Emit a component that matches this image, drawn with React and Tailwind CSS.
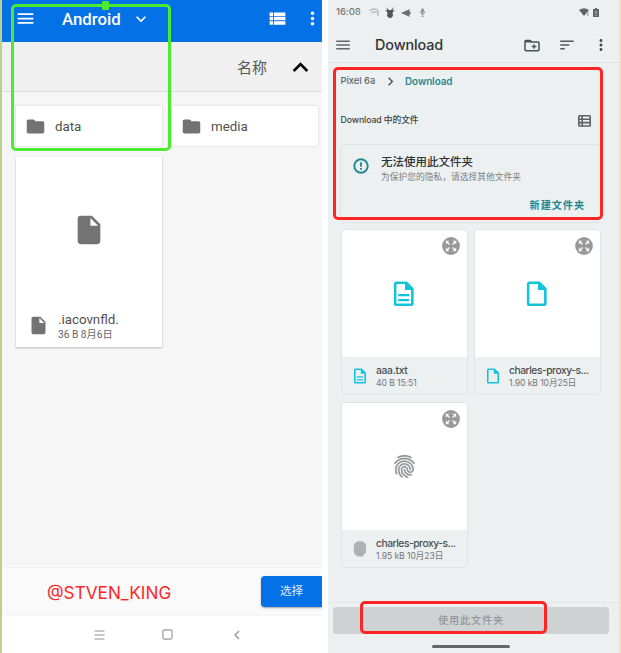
import React from "react";
import {
  MdFolder, MdInsertDriveFile, MdViewList, MdMenu, MdMoreVert, MdExpandMore, MdExpandLess,
  MdSort, MdFingerprint, MdWifi, MdChevronRight, MdChevronLeft,
} from "react-icons/md";

const DocIcon = ({ size, lines }) => (
  <svg width={size} height={size} viewBox="0 0 24 24" fill="none" stroke="#12c3dc" strokeWidth="2.1" className="shrink-0">
    <path d="M14 3H6a1 1 0 0 0-1 1v16a1 1 0 0 0 1 1h12a1 1 0 0 0 1-1V8z" strokeLinejoin="round" />
    <path d="M13 2.5V9h6.5l-5.5-6z" fill="#12c3dc" stroke="none" />
    {lines && <path d="M7.5 13.2h9M7.5 17.2h9" strokeWidth="1.8" />}
  </svg>
);

const NewFolderIcon = () => (
  <svg width="16" height="13" viewBox="0 0 16 13" fill="none" stroke="#4b5052" strokeWidth="1.5" className="shrink-0">
    <path d="M1 2.2v8.6q0 1 1 1h12q1 0 1-1V4q0-1-1-1H7.5L6 1.5H1.7Q1 1.5 1 2.2z" />
    <path d="M1.5 2.5h6" strokeWidth="2" />
    <path d="M10 5.2v4.6M7.7 7.5h4.6" strokeWidth="1.3" />
  </svg>
);

const ListIcon = () => (
  <svg width="13" height="12" viewBox="0 0 13 12" fill="none" stroke="#5f6365" strokeWidth="1.6" className="shrink-0">
    <rect x=".8" y=".8" width="11.4" height="10.2" rx=".6" />
    <path d="M1 4.2h11M1 7.6h11M4.2 1v10" />
  </svg>
);

const AlertIcon = () => (
  <svg width="16" height="16" viewBox="0 0 16 16" fill="none" stroke="#248894" strokeWidth="1.9" className="ml-[12px] mt-[13px] shrink-0">
    <circle cx="8" cy="8" r="6.7" />
    <path d="M8 4.2v4.6M8 10v1.8" />
  </svg>
);

const ExpandBadge = () => (
  <svg width="18" height="18" viewBox="0 0 18 18">
    <circle cx="9" cy="9" r="8.9" fill="#989898" />
    <g fill="#f6f6f6">
      <path d="M3.8 3.8h3.6L3.8 7.4zM14.2 3.8v3.6l-3.6-3.6zM3.8 14.2v-3.6l3.6 3.6zM14.2 14.2h-3.6l3.6-3.6z" />
    </g>
    <path d="M5 5l2.5 2.5M13 5l-2.5 2.5M5 13l2.5-2.5M13 13l-2.5-2.5" stroke="#f6f6f6" strokeWidth="1.5" />
  </svg>
);

const FolderCard = ({ name }) => (
  <div className="flex h-10 w-[146px] items-center bg-white pl-[9px] shadow-[0_0_2px_rgba(0,0,0,0.16)]">
    <MdFolder size={21} color="#737373" />
    <span className="ml-[9px] mt-[2px] text-[13.3px] leading-4 text-[#505050]">{name}</span>
  </div>
);

const FileCard = ({ name, meta, kind }) => (
  <div className="flex h-[166px] w-[127px] flex-col overflow-hidden rounded-[5px] border border-[#e1e4e5] bg-[#ecf0f1]">
    <div className="relative flex h-[127px] shrink-0 items-center justify-center bg-white pr-px">
      {kind === "apk" ? (
        <MdFingerprint size={27} color="#8c8e90" stroke="#8c8e90" strokeWidth="0.5" className="[&>path:first-child]:stroke-none" />
      ) : (
        <DocIcon size={29.5} lines={kind === "text"} />
      )}
      <div className="absolute right-[7px] top-[7px]">
        <ExpandBadge />
      </div>
    </div>
    <div className="flex pl-[8px] pt-[5px]">
      <div className="mt-[5px] flex w-[19px] justify-center">
        {kind === "apk" ? (
          <svg width="14" height="18" viewBox="0 0 14 18" className="shrink-0">
            <path d="M3 2.2Q7 .2 11 2.2L13 5v7l-1.5 2-2 2.5-5-.2L1.5 14 .8 11V5z" fill="#a9adae" />
            <path d="M1.5 6Q7 1.5 12.4 6M2 10Q4 5 9 7t3 5M4 15q-1-5 3-5t3 5" fill="none" stroke="#bfc3c4" strokeWidth=".7" />
          </svg>
        ) : (
          <DocIcon size={18} lines={kind === "text"} />
        )}
      </div>
      <div className="ml-[7px] mt-px whitespace-nowrap">
        <div className="text-[10.3px] font-medium leading-[14px] text-[#4a4e50]">
          <span className={kind === "text" ? "tracking-[-0.3px]" : "tracking-[-0.48px]"}>{name}</span>
        </div>
        <div className="text-[8.6px] leading-[13px] tracking-[-0.08px] text-[#737779]">{meta}</div>
      </div>
    </div>
  </div>
);

const LeftPhone = () => (
  <div className="flex h-[653px] w-[322px] shrink-0 flex-col overflow-hidden border-l-2 border-[#bcd08c] bg-[#f6f6f6] font-[Roboto,'Noto_Sans_CJK_SC',sans-serif]">
    <header className="flex h-[42px] shrink-0 items-start bg-[#0571e6] pl-[13px] pt-2 text-white shadow-[0_1px_2px_rgba(0,0,0,0.25)]">
      <MdMenu size={21} className="shrink-0" />
      <span className="ml-[26px] mt-[1px] w-[58px] text-[16.8px] font-medium leading-5">Android</span>
      <MdExpandMore size={20} className="ml-[11px] mt-px shrink-0" />
      <MdViewList size={21} className="ml-[116px] shrink-0" />
      <MdMoreVert size={21} className="ml-[14px] shrink-0" />
    </header>
    <div className="flex h-[50px] shrink-0 items-center border-b border-[#dedede] bg-[#f0f0f0] pl-[235px]">
      <span className="mt-[2px] text-[15px] leading-5 text-[#555]">名称</span>
      <MdExpandLess size={31} color="#000" className="ml-[18px] mt-[2px] shrink-0" />
    </div>
    <main className="flex grow flex-col gap-[11px] pl-[14px] pt-[14px]">
      <div className="flex gap-[10px]">
        <FolderCard name="data" />
        <FolderCard name="media" />
      </div>
      <div className="flex h-[190px] w-[146px] flex-col bg-white shadow-[0_1px_2px_rgba(0,0,0,0.25)]">
        <div className="flex h-[146px] items-center justify-center">
          <MdInsertDriveFile size={34} color="#737373" />
        </div>
        <div className="flex pl-3 pt-[8px]">
          <MdInsertDriveFile size={21} color="#737373" className="mt-[4px] shrink-0" />
          <div className="ml-[9px] mt-px whitespace-nowrap">
            <div className="text-[13.3px] leading-4 text-[#505050]">.iacovnfld.</div>
            <div className="text-[10.2px] leading-[14px] text-[#666]">36 B 8月6日</div>
          </div>
        </div>
      </div>
    </main>
    <footer className="flex h-12 shrink-0 items-center justify-between border-t border-[#f2f2f2] bg-[#fafafa] pl-[45px]">
      <span className="whitespace-nowrap pt-[3px] font-[Inter,sans-serif] text-[17.2px] leading-5 text-[#ff2727]">@STVEN_KING</span>
      <button className="h-[31px] w-[61px] rounded-l-sm bg-[#0571e6] text-[11.5px] text-[#d9eaff] shadow-[0_1px_2px_rgba(0,0,0,0.35)]">选择</button>
    </footer>
    <nav className="flex h-[38px] shrink-0 items-center border-t border-[#f5f5f5] bg-white pl-[92px]">
      <svg width="11" height="10" viewBox="0 0 11 10" stroke="#b8b8b8" strokeWidth="1.7">
        <path d="M.5 1h10M.5 5h10M.5 9h10" />
      </svg>
      <svg width="11" height="11" viewBox="0 0 11 11" fill="none" stroke="#b4b4b4" strokeWidth="1.6" className="ml-[57px]">
        <rect x=".9" y=".9" width="9.2" height="9.2" rx="2" />
      </svg>
      <MdChevronLeft size={18} color="#a0a0a0" className="ml-[55px]" />
    </nav>
  </div>
);

const RightPhone = () => (
  <div className="ml-[6px] flex h-[653px] w-[293px] shrink-0 flex-col overflow-hidden border-r-2 border-[#ffe0a8] bg-[#ecf0f1] font-[Inter,'Noto_Sans_CJK_SC',sans-serif]">
    <div className="flex h-[25px] shrink-0 items-center pl-2 text-[#777]">
      <span className="w-[25px] text-[9.6px] font-medium tracking-[-0.1px]">16:08</span>
      <svg width="10" height="9" viewBox="0 0 10 9" className="ml-[8px]" fill="none" stroke="#b9bcbd" strokeWidth="1.5">
        <path d="M.5 3Q5-1 9.5 3M2.2 5Q5 2.4 7.8 5M9 3v5" />
      </svg>
      <svg width="10" height="11" viewBox="0 0 10 11" className="ml-[6px]" fill="#555">
        <path d="M1 0 4 3H6L9 0 7.5 3.5 10 3 7.5 5.5 8 9 6 11H4L2 9 2.5 5.5 0 3l2.5.5z" />
      </svg>
      <svg width="10" height="8" viewBox="0 0 10 8" className="ml-[6px]" fill="#6b6d6e">
        <path d="M0 4 9 0 8 2.4h1.5v3H8L9 8z" />
      </svg>
      <svg width="7" height="9" viewBox="0 0 7 9" className="ml-[8px]" fill="none" stroke="#999">
        <path d="M3.5 0v7M1 4l2.5 3L6 4zM2 8.2h3M2.5 1v3M4.5 1v3" />
      </svg>
      <svg width="10" height="9" viewBox="0 0 10 9" className="ml-[153px]">
        <path d="M0 2Q5-1.5 10 2L5 8z" fill="#626566" />
        <path d="M8.8 4v4" stroke="#aaa" strokeWidth="1.4" />
      </svg>
      <svg width="6" height="9" viewBox="0 0 6 9" className="ml-[4px]">
        <path d="M2 0h2v1h2v8H0V1h2z" fill="#626566" />
        <path d="M3 3v3M3 7v1" stroke="#ccc" />
      </svg>
    </div>
    <header className="flex h-[38px] shrink-0 items-center border-b border-[#dfe3e4] pl-[6px] pt-[3px]">
      <MdMenu size={18} color="#626667" className="shrink-0" />
      <h1 className="ml-[23px] w-[149px] text-[14.4px] font-medium tracking-[-0.1px] text-[#303436]">Download</h1>
      <NewFolderIcon />
      <MdSort size={18} color="#55595b" className="ml-[18px] shrink-0" />
      <MdMoreVert size={18} color="#484c4e" className="ml-[16px] shrink-0" />
    </header>
    <div className="flex h-[36px] shrink-0 items-center pl-[12.5px] text-[9.8px] font-medium">
      <span className="w-9 whitespace-nowrap text-[9.3px] text-[#616567]">Pixel 6a</span>
      <MdChevronRight size={17} color="#505456" stroke="#505456" className="ml-[5px] [&>path:first-child]:stroke-none" />
      <span className="ml-[6.5px] text-[9.9px] font-semibold tracking-[-0.05px] text-[#248894]">Download</span>
    </div>
    <div className="flex h-[41px] shrink-0 items-center justify-between pl-[12.5px] pr-[28px] pt-[2px]">
      <span className="text-[8.75px] font-medium tracking-[-0.1px] text-[#3f4345]">Download 中的文件</span>
      <ListIcon />
    </div>
    <section className="ml-[12px] mt-[4px] flex h-[79px] w-[261px] shrink-0 rounded-[5px] border border-[#dfe3e4]">
      <AlertIcon />
      <div className="ml-[12px] w-[204px]">
        <div className="mt-[9px] text-[11.5px] font-medium leading-4 text-[#303436]">无法使用此文件夹</div>
        <div className="text-[8.75px] leading-[14px] text-[#7b8082]">为保护您的隐私，请选择其他文件夹</div>
        <div className="mt-[13px] text-right text-[10.2px] font-bold leading-4 tracking-[0.9px] text-[#248894]">新建文件夹</div>
      </div>
    </section>
    <div className="ml-[13px] mt-[6px] grid w-[260px] shrink-0 grid-cols-[127px_127px] gap-x-[6px] gap-y-[7px]">
      <FileCard name="aaa.txt" meta="40 B 15:51" kind="text" />
      <FileCard name="charles-proxy-s..." meta="1.90 kB 10月25日" kind="file" />
      <FileCard name="charles-proxy-s..." meta="1.95 kB 10月23日" kind="apk" />
    </div>
    <footer className="mt-auto flex h-[51px] shrink-0 flex-col border-t border-[#e4e8e9] pl-[5px] pt-[4px]">
      <button className="h-[27px] w-[276px] rounded-[3px] bg-[#cfd2d3] text-[10.2px] font-medium tracking-[0.8px] text-[#939698]">使用此文件夹</button>
      <div className="ml-[99px] mt-[11px] h-[3px] w-[78px] rounded-full bg-[#646667]" />
    </footer>
  </div>
);

export default function App() {
  return (
    <div className="relative flex h-[653px] w-[621px] overflow-hidden bg-white">
      <LeftPhone />
      <RightPhone />
      <div className="absolute left-[11px] top-1 h-[147px] w-[160px] rounded-[5px] border-[3px] border-[#4eea32]" />
      <div className="absolute left-[102px] top-[1px] h-[9px] w-[7px] rounded-[1px] bg-[#4eea32]" />
      <div className="absolute left-[333px] top-[67px] h-[153px] w-[270px] rounded-[5px] border-[3px] border-[#ff2525]" />
      <div className="absolute left-[360px] top-[601px] h-[33px] w-[187px] rounded-[5px] border-[3px] border-[#ff2525]" />
    </div>
  );
}
